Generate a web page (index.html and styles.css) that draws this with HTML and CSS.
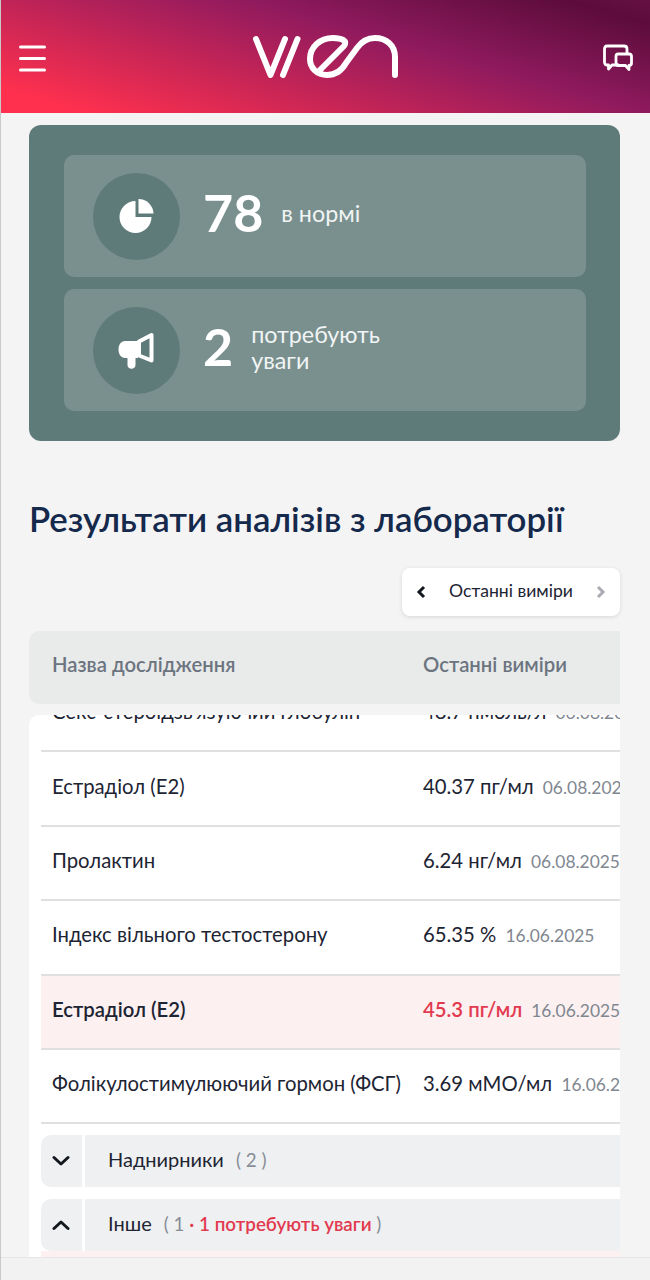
FILE: index.html
```html
<!DOCTYPE html>
<html lang="uk">
<head>
  <meta charset="UTF-8" />
  <meta name="viewport" content="width=device-width, initial-scale=1.0"/>
  <title>Результати аналізів</title>
  <link rel="stylesheet" href="styles.css">
</head>
<body>

<header class="topbar">
  <svg class="icon-menu" viewBox="0 0 27 27" width="27" height="27">
    <path d="M1.5 2H25.5M1.5 13.500H25.5M1.5 25H25.5" />
  </svg>
  <svg class="logo" viewBox="0 0 146 43" width="146" height="43">
    <path d="M4 4L18.500 40L33 4M31 40L45.500 4" />
    <path d="M68 35L92 11C96 6 90 3 81 3C68 3 58 12 58 24C58 33 65 40 75 40C84 40 90 35 94 28L105 13C110 6 116 3 123 3C134 3 143 10 143 22V40" />
  </svg>
  <svg class="icon-chat" viewBox="0 0 30 28" width="30" height="28">
    <path d="M16 21H9L5.500 25V21H4C2.500 21 1.500 20 1.500 18V5C1.500 3 2.500 2 4 2H21C23 2 24 3 24 5V10" />
    <path d="M15 10H26C27.500 10 28.500 11 28.500 12.500V19C28.500 20.500 27.500 21.500 26 21.500V25.500L22.500 21.500H15.500C14 21.500 13 20.500 13 19V12.500C13 11 14 10 15 10Z" />
  </svg>
</header>

<main class="page">
  <section class="summary">
    <div class="stat">
      <div class="stat-icon">
        <svg viewBox="0 0 34 34" width="34" height="34">
          <path d="M15.500 2V18H31.500A16 16 0 1 1 15.500 2Z" />
          <path d="M18.500 0A15 15 0 0 1 33.500 14.500H18.500Z" />
        </svg>
      </div>
      <span class="stat-num stat-num-big">78</span>
      <span class="stat-label">в нормі</span>
    </div>
    <div class="stat">
      <div class="stat-icon">
        <svg viewBox="0 0 38 34" width="38" height="34">
          <path class="horn" d="M21 8.500L33.500 2V27.500L21 22.500Z" />
          <path d="M7 8H20V25H17.500V32C17.500 37 9.500 37 9.500 32V25H7C3 25 0.500 21 0.500 16.500C0.500 12 3 8 7 8Z" />
        </svg>
      </div>
      <span class="stat-num">2</span>
      <span class="stat-label">потребують<br>уваги</span>
    </div>
  </section>

  <h1 class="title">Результати аналізів з лабораторії</h1>

  <div class="switch-row">
    <div class="switch">
      <svg class="arrow" viewBox="0 0 10 14" width="10" height="14"><path d="M8 2L3 7L8 12" /></svg>
      <span>Останні виміри</span>
      <svg class="arrow arrow-off" viewBox="0 0 10 14" width="10" height="14"><path d="M2 2L7 7L2 12" /></svg>
    </div>
  </div>

  <div class="table-head">
    <div class="col-name">Назва дослідження</div>
    <div>Останні виміри</div>
  </div>

  <div class="panel">
    <div class="row row-cut">
      <div class="col-name">Секс-стероїдзв'язуючий глобулін</div>
      <div class="value">48.7 нмоль/л <span class="date">06.08.2025</span></div>
    </div>
    <div class="row">
      <div class="col-name">Естрадіол (Е2)</div>
      <div class="value">40.37 пг/мл <span class="date">06.08.2025</span></div>
    </div>
    <div class="row">
      <div class="col-name">Пролактин</div>
      <div class="value">6.24 нг/мл <span class="date">06.08.2025</span></div>
    </div>
    <div class="row">
      <div class="col-name">Індекс вільного тестостерону</div>
      <div class="value">65.35 % <span class="date">16.06.2025</span></div>
    </div>
    <div class="row row-alert">
      <div class="col-name">Естрадіол (Е2)</div>
      <div class="value">45.3 пг/мл <span class="date">16.06.2025</span></div>
    </div>
    <div class="row">
      <div class="col-name">Фолікулостимулюючий гормон (ФСГ)</div>
      <div class="value">3.69 мМО/мл <span class="date">16.06.2025</span></div>
    </div>

    <div class="group">
      <div class="group-btn">
        <svg viewBox="0 0 18 12" width="18" height="12"><path d="M2 2.500L9 9L16 2.500" /></svg>
      </div>
      <div class="group-title">Наднирники <span class="count">( 2 )</span></div>
    </div>
    <div class="group">
      <div class="group-btn">
        <svg viewBox="0 0 18 12" width="18" height="12"><path d="M2 9.500L9 3L16 9.500" /></svg>
      </div>
      <div class="group-title">Інше <span class="count">( 1 <b class="dot">·</b> <b class="warn">1 потребують уваги</b> )</span></div>
    </div>
    <div class="row-peek"></div>
  </div>
</main>

<footer class="bottom"></footer>

</body>
</html>
```

FILE: styles.css
```css
html, body {
  margin: 0;
  height: 1280px;
  overflow: hidden;
}
body {
  position: relative;
  font-family: 'Lato', 'Open Sans', sans-serif;
  background-color: #f4f4f4;
  color: #1d2433;
  border-left: 1px solid #c9c9c9;
  box-sizing: border-box;
}
.topbar {
  height: 113px;
  margin-left: -1px;
  padding: 0 17px 0 19px;
  box-sizing: border-box;
  display: flex;
  align-items: center;
  justify-content: space-between;
  background: linear-gradient(16deg, #ff304e 0%, #ff304e 8%, #8f1a5e 62%, #5c0c3c 92%, #651044 100%);
}
.topbar svg {
  fill: none;
  stroke: #fff;
}
.icon-menu {
  stroke-width: 3;
  stroke-linecap: round;
  margin-top: 3px;
}
.logo {
  stroke-width: 6;
  stroke-linecap: round;
  stroke-linejoin: round;
  margin-left: 1px;
}
.icon-chat {
  stroke-width: 2.8;
  stroke-linejoin: round;
  margin-top: 2px;
}
.page {
  padding: 12px 30px 0 28px;
}
.summary {
  background: #5f7b79;
  border-radius: 12px;
  padding: 30px 34px 30px 35px;
  display: flex;
  flex-direction: column;
  gap: 12px;
}
.stat {
  height: 122px;
  background: #79908f;
  border-radius: 10px;
  padding-left: 29px;
  display: flex;
  align-items: center;
  color: #fff;
}
.stat-icon {
  width: 87px;
  height: 87px;
  border-radius: 50%;
  background: #5f7b79;
  display: flex;
  align-items: center;
  justify-content: center;
  margin-right: 23px;
}
.stat-icon svg {
  fill: #fff;
  overflow: visible;
}
.stat-icon .horn {
  fill: none;
  stroke: #fff;
  stroke-width: 4;
  stroke-linejoin: round;
}
.stat-num {
  font-size: 52px;
  font-weight: 700;
  line-height: 1;
  margin-right: 18px;
  padding-bottom: 8px;
}
.stat-label {
  font-size: 23.3px;
  line-height: 26px;
  color: #f1f4f4;
  padding-bottom: 6px;
}
.title {
  margin: 55px 0 0;
  font-size: 34.8px;
  line-height: 46px;
  font-weight: 600;
  color: #14294b;
}
.switch-row {
  display: flex;
  justify-content: flex-end;
  margin-top: 26px;
}
.switch {
  width: 218px;
  height: 48px;
  box-sizing: border-box;
  padding: 0 14px 4px;
  background: #fff;
  border-radius: 8px;
  box-shadow: 0 1px 4px rgba(0,0,0,0.12);
  display: flex;
  align-items: center;
  justify-content: space-between;
  font-size: 17.6px;
}
.arrow {
  fill: none;
  stroke: #14181f;
  stroke-width: 3;
  margin-top: 4px;
}
.arrow-off {
  stroke: #a9adb2;
}
.table-head {
  margin-top: 15px;
  height: 73px;
  box-sizing: border-box;
  background: #e9ebeb;
  border-radius: 10px 0 0 10px;
  padding: 0 0 7px 23px;
  display: flex;
  align-items: center;
  font-size: 20.3px;
  font-weight: 600;
  color: #6c7480;
  white-space: nowrap;
  overflow: hidden;
}
.col-name {
  width: 371px;
  flex: none;
}
.panel {
  margin-top: 11px;
  height: 542px;
  background: #fff;
  border-radius: 10px 0 0 0;
  padding-left: 12px;
  overflow: hidden;
}
.row {
  height: 74.4px;
  box-sizing: border-box;
  border-bottom: 2px solid #dfe0e2;
  padding: 0 0 6px 11px;
  display: flex;
  align-items: center;
  font-size: 20.3px;
  white-space: nowrap;
}
.row-cut {
  margin-top: -37px;
}
.row-alert {
  background: #fcf0f0;
  font-weight: 600;
}
.row-alert .value {
  color: #e2394f;
}
.date {
  font-size: 17.4px;
  font-weight: 400;
  color: #7f8791;
  margin-left: 4px;
}
.group {
  height: 52px;
  margin-top: 12px;
  display: flex;
  align-items: stretch;
}
.row + .group {
  margin-top: 11px;
}
.group-btn {
  width: 41px;
  box-sizing: border-box;
  padding-right: 2px;
  background: #eff0f2;
  border-radius: 10px 0 0 10px;
  display: flex;
  align-items: center;
  justify-content: center;
}
.group-btn svg {
  fill: none;
  stroke: #14181f;
  stroke-width: 3;
  stroke-linecap: round;
  stroke-linejoin: round;
}
.group-title {
  flex: 1;
  margin-left: 3px;
  background: #eff0f2;
  padding: 0 0 4px 23px;
  display: flex;
  align-items: center;
  font-size: 20px;
  white-space: nowrap;
}
.count {
  margin-left: 12px;
  font-size: 18.8px;
  color: #868d97;
  white-space: pre;
}
.dot, .warn {
  color: #e2394f;
  font-weight: 600;
}
.row-peek {
  height: 6px;
  background: #fcf0f0;
}
.bottom {
  position: absolute;
  left: -1px;
  right: 0;
  bottom: 0;
  height: 23px;
  background: #f2f2f2;
  border-top: 1px solid #e6e6e6;
  box-sizing: border-box;
}
```
